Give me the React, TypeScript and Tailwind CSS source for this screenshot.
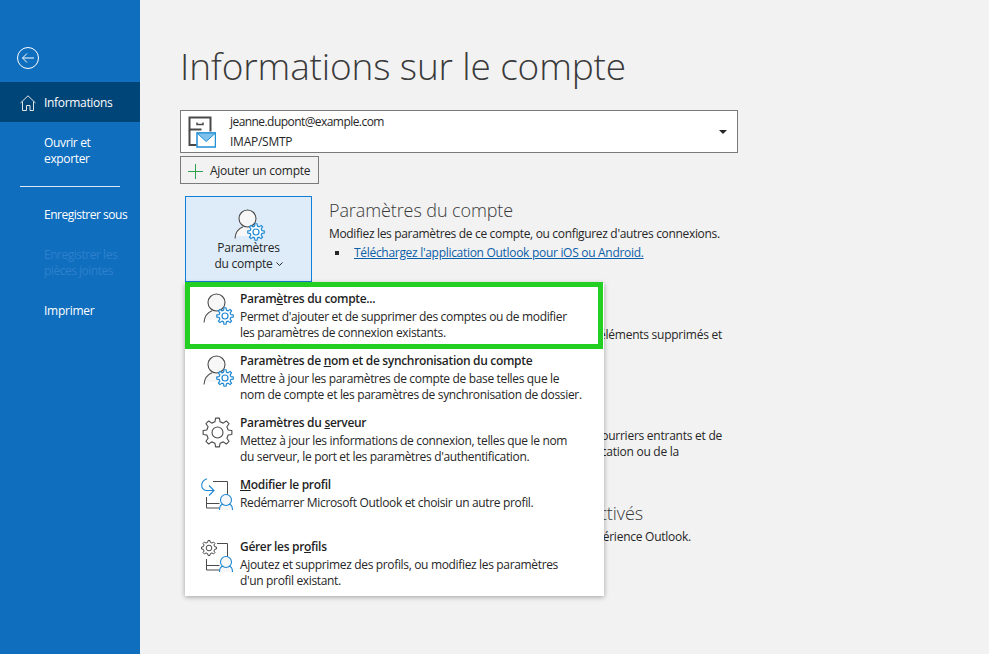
import React from "react";

function gearPath(cx: number, cy: number, rOut: number, rIn: number, teeth = 8) {
  const pts: string[] = [];
  const step = (Math.PI * 2) / teeth;
  for (let i = 0; i < teeth; i++) {
    const a = i * step - Math.PI / 2;
    const list: [number, number][] = [
      [rIn, a - step * 0.3],
      [rOut, a - step * 0.17],
      [rOut, a + step * 0.17],
      [rIn, a + step * 0.3],
    ];
    for (const [r, t] of list) {
      pts.push(`${(cx + r * Math.cos(t)).toFixed(2)} ${(cy + r * Math.sin(t)).toFixed(2)}`);
    }
  }
  return `M${pts.join("L")}Z`;
}

const GREY = "#4a4a4a";
const BLUE = "#1e88d2";

function PersonGear() {
  return (
    <svg width="33" height="33" viewBox="0 0 33 33" fill="none" className="block">
      <path d="M3 30.500c.4-6 3.500-10 8-11.500h8l3 9H3z" fill="#f7f7f7" />
      <circle cx="15.500" cy="10.500" r="8.500" fill="#f7f7f7" stroke={GREY} strokeWidth="1.100" />
      <path d="M3 30.500c.4-6 3.500-10 8-11.800" stroke={GREY} strokeWidth="1.100" />
      <path d={gearPath(24, 24, 8.300, 6)} fill="#fff" stroke={BLUE} strokeWidth="1.200" strokeLinejoin="round" />
      <circle cx="24" cy="24" r="3" stroke={BLUE} strokeWidth="1.200" />
    </svg>
  );
}

function ServerGear() {
  return (
    <svg width="33" height="33" viewBox="0 0 33 33" fill="none" className="block">
      <path d={gearPath(16.500, 16.500, 14.500, 11)} stroke={GREY} strokeWidth="1.100" strokeLinejoin="round" />
      <circle cx="16.500" cy="16.500" r="5.500" stroke={GREY} strokeWidth="1.100" />
    </svg>
  );
}

function ProfileParts() {
  return (
    <>
      <path d="M5.500 19v11h14M5.500 25.500h13" stroke={GREY} strokeWidth="1" />
      <path d="M18 32c0-4.500 2.500-6.500 7-6.500s7 2 7 6.500z" fill="#f7f7f7" />
      <circle cx="25" cy="22" r="5.500" fill="#f7f7f7" stroke={BLUE} strokeWidth="1.100" />
      <path d="M18.500 32c0-3.500 1.500-5.500 3.500-6M31.500 32c0-3.500-1.500-5.500-3.500-6" stroke={BLUE} strokeWidth="1.100" />
    </>
  );
}

function ModifyProfile() {
  return (
    <svg width="33" height="33" viewBox="0 0 33 33" fill="none" className="block">
      <path d="M12 3.500h14.500V17" stroke={GREY} strokeWidth="1" />
      <path d="M6 .8C2.500 2 .7 4.500.7 7.500c0 3 2.300 5 5.300 5h7" stroke={BLUE} strokeWidth="1.100" />
      <path d="M8 7.500l5 5-5 5" stroke={BLUE} strokeWidth="1.100" />
      <ProfileParts />
    </svg>
  );
}

function ManageProfiles() {
  return (
    <svg width="33" height="33" viewBox="0 0 33 33" fill="none" className="block">
      <path d="M16 3.500h10.500V17" stroke={GREY} strokeWidth="1" />
      <path d={gearPath(8, 8, 7.500, 5.800)} stroke={GREY} strokeWidth="1" strokeLinejoin="round" />
      <circle cx="8" cy="8" r="2.800" stroke={GREY} strokeWidth="1" />
      <ProfileParts />
    </svg>
  );
}

function MailStore() {
  return (
    <svg width="28" height="32" viewBox="0 0 28 32" fill="none">
      <path d="M1.500 14.500V1.500h21v14" stroke={GREY} strokeWidth="2" />
      <path d="M1.500 13.500h12M1.500 14v15h7" stroke={GREY} strokeWidth="2" />
      <path d="M9 6.500v2h6v-2" stroke={GREY} strokeWidth="1.500" />
      <rect x="9" y="17" width="18.500" height="14" fill="#fff" stroke="#1f8fd6" strokeWidth="1.500" />
      <path d="M9 17l9.200 8.500L27.500 17z" fill="#7fc1ea" stroke="#1f8fd6" strokeWidth="1" />
    </svg>
  );
}

function Row({ children, className = "" }: { children: React.ReactNode; className?: string }) {
  return <div className={`text-[12px] leading-[16px] ${className}`}>{children}</div>;
}

type Item = { icon: React.ReactNode; title: React.ReactNode; lines: string[] };

const items: Item[] = [
  {
    icon: <PersonGear />,
    title: <>Param<u>è</u>tres du compte...</>,
    lines: ["Permet d'ajouter et de supprimer des comptes ou de modifier", "les paramètres de connexion existants."],
  },
  {
    icon: <PersonGear />,
    title: <>Paramètres de <u>n</u>om et de synchronisation du compte</>,
    lines: ["Mettre à jour les paramètres de compte de base telles que le", "nom de compte et les paramètres de synchronisation de dossier."],
  },
  {
    icon: <ServerGear />,
    title: <>Paramètres du <u>s</u>erveur</>,
    lines: ["Mettez à jour les informations de connexion, telles que le nom", "du serveur, le port et les paramètres d'authentification."],
  },
  {
    icon: <ModifyProfile />,
    title: <><u>M</u>odifier le profil</>,
    lines: ["Redémarrer Microsoft Outlook et choisir un autre profil."],
  },
  {
    icon: <ManageProfiles />,
    title: <>Gérer les pr<u>o</u>fils</>,
    lines: ["Ajoutez et supprimez des profils, ou modifiez les paramètres", "d'un profil existant."],
  },
];

export default function App() {
  return (
    <div className="flex h-[654px] w-[989px] overflow-hidden bg-[#f2f2f2] font-['Open_Sans',sans-serif] text-[#262626] tracking-[-0.25px]">
      <aside className="flex w-[140px] shrink-0 flex-col bg-[#106ebe] text-[12px] leading-[16px] text-white">
        <div className="flex h-[82px] items-start pl-[16px] pt-[46px]">
          <svg width="24" height="24" viewBox="0 0 24 24" fill="none" stroke="#fff" strokeWidth="1">
            <circle cx="12" cy="12" r="10.500" />
            <path d="M18 12H6.500M11 7.500 6.500 12l4.500 4.500" />
          </svg>
        </div>
        <div className="flex h-[40px] items-center bg-[#004578] pl-[20px]">
          <svg width="16" height="16" viewBox="0 0 16 16" fill="none" stroke="#e5e5e5" strokeWidth="1" className="mr-[8px] mt-[2px]">
            <path d="M0.500 8 8 0.800 15.500 8M2.500 6.500v9h4v-5h3.500v5h3.500v-9" />
          </svg>
          <span className="pt-[2px] tracking-[-0.32px]">Informations</span>
        </div>
        <div className="pl-[44px] pt-[13px] pb-[19px] tracking-[-0.35px]">
          Ouvrir et<br />exporter
        </div>
        <div className="ml-[20px] h-px w-[100px] bg-[#dbe9f6]" />
        <div className="pl-[44px] pt-[20px] tracking-[-0.48px]">Enregistrer sous</div>
        <div className="pl-[44px] pt-[24px] text-[#2c80cc] tracking-[-0.48px]">
          Enregistrer les<br />pièces jointes
        </div>
        <div className="pl-[44px] pt-[24px]">Imprimer</div>
      </aside>

      <main className="relative flex-1 pl-[40px]">
        <h1 className="pt-[36px] text-[37px] font-light leading-[60px] tracking-[-0.15px] text-[#3a3a3a]">
          Informations sur le compte
        </h1>
        <div className="mt-[14px] flex h-[43px] w-[558px] items-center border border-[#7a7a7a] bg-white pl-[7px] pr-[10px]">
          <MailStore />
          <div className="ml-[14px] flex-1 text-[12px] leading-[20px]">
            <div className="tracking-[-0.56px]">jeanne.dupont@example.com</div>
            <div>IMAP/SMTP</div>
          </div>
          <div className="h-0 w-0 border-x-[4px] border-t-[4px] border-x-transparent border-t-[#262626]" />
        </div>
        <div className="mt-[3px] flex h-[28px] w-[139px] items-center border border-[#7a7a7a] pl-[7px] pt-[2px] text-[12px]">
          <svg width="15" height="15" viewBox="0 0 15 15" stroke="#2e9e4f" strokeWidth="1" className="mr-[7px]">
            <path d="M7.500 0v15M0 7.500h15" />
          </svg>
          Ajouter un compte
        </div>

        <section className="mt-[12px] flex h-[86px] pl-[5px]">
          <div className="flex w-[127px] flex-col items-center border border-[#0f7fd8] bg-[#deecf9] pt-[11px] text-center text-[12px] leading-[16px]">
            <PersonGear />
            <div className="mt-[-1px]">Paramètres</div>
            <div className="flex items-center gap-[3px]">
              du compte
              <svg width="7" height="5" viewBox="0 0 7 5" fill="none" stroke="#262626">
                <path d="M.5 .5l3 3 3-3" />
              </svg>
            </div>
          </div>
          <div className="ml-[17px] w-[393px]">
            <h2 className="pt-[2px] text-[18px] font-light leading-[24px] tracking-[-0.1px] text-[#3a3a3a]">Paramètres du compte</h2>
            <Row className="mt-[4px] whitespace-nowrap tracking-[-0.33px]">Modifiez les paramètres de ce compte, ou configurez d'autres connexions.</Row>
            <Row className="mt-[3px] flex items-center">
              <span className="ml-[6px] mr-[15px] h-[4px] w-[4px] bg-[#262626]" />
              <span className="whitespace-nowrap tracking-[-0.3px] text-[#0b5ea8] underline">Téléchargez l'application Outlook pour iOS ou Android.</span>
            </Row>
          </div>
        </section>

        <div className="ml-[149px] w-[393px] text-right">
          <Row className="mt-[45px] whitespace-nowrap">en vidant les éléments supprimés et</Row>
          <Row className="mt-[85px] whitespace-nowrap">Gérez vos courriers entrants et de</Row>
          <Row className="mr-[43px] whitespace-nowrap">de notification ou de la</Row>
          <div className="mr-[79px] mt-[41px] text-[18px] font-light leading-[24px] tracking-[-0.1px] text-[#3a3a3a]">Compléments activés</div>
          <Row className="mr-[31px] mt-[4px] whitespace-nowrap">de votre expérience Outlook.</Row>
        </div>

        <div className="absolute left-[45px] top-[283px] w-[419px] bg-white pt-[2px] pb-[1px] shadow-[0_1px_5px_rgba(0,0,0,0.35)]">
          {items.map((it, i) => (
            <div key={i} className="flex h-[62px] pt-[6px]">
              <div className="w-[55px] shrink-0 pl-[16px] pt-[1px]">{it.icon}</div>
              <div className="text-[12px] leading-[16px] tracking-[-0.34px]">
                <div className="mb-[2px] font-semibold tracking-[-0.32px] text-[#1f1f1f]">{it.title}</div>
                {it.lines.map((l) => (
                  <div key={l} className="whitespace-nowrap">{l}</div>
                ))}
              </div>
            </div>
          ))}
          <div className="absolute left-0 top-[-1px] h-[67px] w-[418px] border-[5px] border-[#22cf22]" />
        </div>
      </main>
    </div>
  );
}
